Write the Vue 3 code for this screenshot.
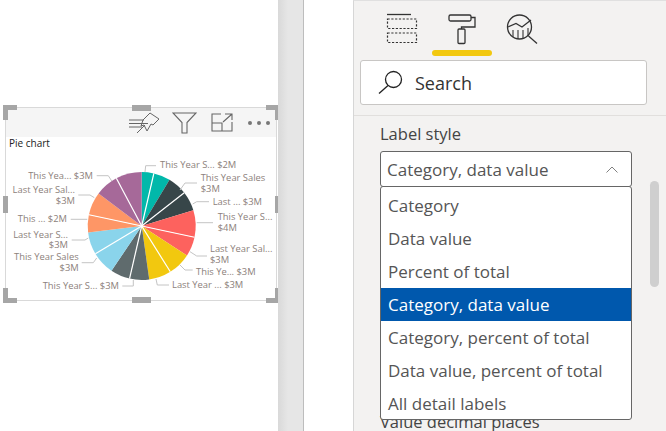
<template>
  <div class="page">
    <div class="canvas">
      <div class="visual">
        <div class="visual-header">
          <svg class="hd-icon pin" width="31" height="21" viewBox="0 0 31 21" fill="none" stroke="#666" stroke-width="1">
            <path d="M0 8H15M0 11.5H19M0 15H13" />
            <path d="M14 8L21 1L30 7L24 13L22 12L18 19L15 13L12 14Z" />
            <path d="M8 21L16 13" />
          </svg>
          <svg class="hd-icon funnel" width="25" height="22" viewBox="0 0 25 22" fill="none" stroke="#666" stroke-width="1.1">
            <path d="M1 1H24L15 10.5V21H10V10.5Z" />
          </svg>
          <svg class="hd-icon expand" width="22" height="19" viewBox="0 0 22 19" fill="none" stroke="#666" stroke-width="1.1">
            <path d="M10 1H1V18H21V9" />
            <path d="M1 10H11V18" />
            <path d="M12 9L21 1M14 1H21V7" />
          </svg>
          <div class="dots"><i></i><i></i><i></i></div>
        </div>
        <div class="visual-title">Pie chart</div>
        <!-- viewBox uses page coordinates so the labels read directly off the screenshot -->
        <svg class="pie" width="270" height="150" viewBox="6 150 270 150">
          <path v-for="s in slices" :key="s.from" :d="s.d" :fill="s.color" />
          <path v-for="(d, i) in separators" :key="'sep' + i" :d="d" stroke="#fff" stroke-width="1.2" />
          <path v-for="(l, i) in leaders" :key="'lead' + i" :d="l" fill="none" stroke="#c4c4c4" stroke-width="1" />
          <text
            v-for="(t, i) in labels"
            :key="'label' + i"
            :x="t.x"
            :y="t.y"
            :text-anchor="t.anchor || 'start'"
            class="pie-label"
          >{{ t.text }}</text>
        </svg>
        <span v-for="h in handles" :key="h" class="handle" :class="h"></span>
      </div>
    </div>
    <div class="gutter"></div>
    <div class="spacer"></div>
    <div class="pane">
      <div class="tabs">
        <button class="tab">
          <svg width="32" height="31" viewBox="0 0 32 31" fill="none" stroke="#333" stroke-width="1.2">
            <path d="M1 1.5H25" stroke-width="1.3" />
            <path d="M1.5 6H30.5V15.5H1.5ZM1.5 20H30.5V29.5H1.5Z" stroke-dasharray="2.2 1.6" />
          </svg>
        </button>
        <button class="tab active">
          <svg width="30" height="32" viewBox="0 0 30 32" fill="none" stroke="#333" stroke-width="1.3">
            <rect x="2" y="2" width="22" height="6" rx="1.5" />
            <path d="M24 4.5H28V14H14.5V16" />
            <rect x="11" y="16" width="7" height="14.5" rx="1" />
          </svg>
        </button>
        <button class="tab">
          <svg width="32" height="32" viewBox="0 0 32 32" fill="none" stroke="#333" stroke-width="1.3">
            <circle cx="13.5" cy="14" r="12" />
            <path d="M2 14L10 10.5L16 14L25 7" />
            <path d="M7 17V24M12 17V26M17 17V26M22 15V23" stroke-width="1.1" />
            <path d="M22.5 23L31 30.5" />
          </svg>
        </button>
      </div>
      <div class="search">
        <svg width="25" height="25" viewBox="0 0 25 25" fill="none" stroke="#222" stroke-width="1.3">
          <circle cx="15.5" cy="9.5" r="8" />
          <path d="M10 15.5L1 23.5" />
        </svg>
        <span>Search</span>
      </div>
      <div class="divider"></div>
      <div class="field-label">Label style</div>
      <div class="select-wrap">
        <div class="select">
          <span>Category, data value</span>
          <svg width="12" height="7" viewBox="0 0 12 7" fill="none" stroke="#808080" stroke-width="1">
            <path d="M0.5 6.5L6 1L11.5 6.5" />
          </svg>
        </div>
        <ul class="menu">
          <li v-for="o in options" :key="o" :class="{ selected: o === selected }">{{ o }}</li>
        </ul>
      </div>
      <div class="field-label next">Value decimal places</div>
      <div class="scrollbar"></div>
    </div>
  </div>
</template>

<script setup>
const cx = 141.7
const cy = 226
const r = 54

const colors = ['#01b8aa', '#374649', '#fd625e', '#f2c80f', '#5f6b6d', '#8ad4eb', '#fe9666', '#a66999']
// slice edges in degrees, clockwise from the top
const edges = [0, 13, 31, 52, 73, 102, 123, 148, 172, 193, 214, 239, 263, 282, 307, 332, 360]

function point(deg) {
  const a = (deg * Math.PI) / 180
  return `${(cx + r * Math.sin(a)).toFixed(2)} ${(cy - r * Math.cos(a)).toFixed(2)}`
}

const slices = edges.slice(0, -1).map((from, i) => {
  const to = edges[i + 1]
  return {
    from,
    color: colors[Math.floor(i / 2)],
    d: `M${cx} ${cy}L${point(from)}A${r} ${r} 0 0 1 ${point(to)}Z`
  }
})

// the white line only shows between two slices of one colour
const separators = edges.filter((_, i) => i % 2 === 1).map((deg) => `M${cx} ${cy}L${point(deg)}`)

const leaders = [
  'M145 172L145.7 165.7H156',
  'M180 190L185 183H197',
  'M192.7 204L196.7 201.7H209',
  'M196.7 222.7H213',
  'M190 251.7L196.7 256H207',
  'M180 265L185 270H192.7',
  'M156 279L157.3 285H169',
  'M133.3 280V286H122.3',
  'M96.7 258L93.3 262.7H81.7',
  'M88.3 238L85 240H71.7',
  'M87.3 219.3H70.7',
  'M94.3 197.7L90 195H78.3',
  'M111.7 181L108.3 175.7H96.7'
]

const labels = [
  { x: 160, y: 168, text: 'This Year S... $2M' },
  { x: 200.7, y: 181, text: 'This Year Sales' },
  { x: 200.7, y: 192, text: '$3M' },
  { x: 212.7, y: 205, text: 'Last ... $3M' },
  { x: 217.7, y: 220, text: 'This Year S...' },
  { x: 217.7, y: 231, text: '$4M' },
  { x: 210, y: 252, text: 'Last Year Sal...' },
  { x: 210, y: 263, text: '$3M' },
  { x: 196, y: 275, text: 'This Ye... $3M' },
  { x: 172, y: 288, text: 'Last Year ... $3M' },
  { x: 119, y: 289, text: 'This Year S... $3M', anchor: 'end' },
  { x: 78.7, y: 260, text: 'This Year Sales', anchor: 'end' },
  { x: 78.7, y: 271, text: '$3M', anchor: 'end' },
  { x: 68, y: 238, text: 'Last Year S...', anchor: 'end' },
  { x: 68, y: 248, text: '$3M', anchor: 'end' },
  { x: 67, y: 222, text: 'This ... $2M', anchor: 'end' },
  { x: 75, y: 193, text: 'Last Year Sal...', anchor: 'end' },
  { x: 75, y: 204, text: '$3M', anchor: 'end' },
  { x: 93, y: 179, text: 'This Yea... $3M', anchor: 'end' }
]

const handles = ['tl', 'tm', 'tr', 'ml', 'mr', 'bl', 'bm', 'br']

const options = [
  'Category',
  'Data value',
  'Percent of total',
  'Category, data value',
  'Category, percent of total',
  'Data value, percent of total',
  'All detail labels'
]
const selected = 'Category, data value'
</script>

<style>
html,
body {
  margin: 0;
  background: #fff;
}
</style>

<style scoped>
.page {
  display: flex;
  width: 666px;
  height: 431px;
  overflow: hidden;
  font-family: "Open Sans", "Noto Sans", sans-serif;
  color: #333;
}

.canvas {
  width: 278px;
  flex: none;
  padding: 107px 0 0 5px;
  box-sizing: border-box;
  background: #fff;
  overflow: hidden;
}

.gutter {
  width: 26px;
  flex: none;
  background: linear-gradient(90deg, #d9d9d9, #e6e6e6 10px);
  border-right: 1px solid #bdbdbd;
  box-sizing: border-box;
}

.spacer {
  width: 49px;
  flex: none;
  background: #fff;
}

.pane {
  position: relative;
  flex: 1;
  background: #f3f2f1;
  border-left: 1px solid #d6d6d6;
  border-top: 1px solid #e0e0e0;
  padding: 0 6px;
  box-sizing: border-box;
}

/* visual */
.visual {
  position: relative;
  width: 272px;
  height: 194px;
  border: 1px solid #d9d9d9;
  box-sizing: border-box;
  background: #fff;
}

.visual-header {
  display: flex;
  align-items: center;
  height: 29px;
  padding: 0 0 0 123px;
  background: #f5f5f5;
}

.hd-icon {
  flex: none;
}

.funnel {
  margin-left: 12px;
}

.expand {
  margin-left: 14px;
}

.dots {
  display: flex;
  gap: 5px;
  margin-left: 15px;
}

.dots i {
  width: 4px;
  height: 4px;
  border-radius: 50%;
  background: #777;
}

.visual-title {
  height: 13px;
  padding-left: 3px;
  font-size: 10px;
  line-height: 13px;
  color: #222;
}

.pie {
  display: block;
}

.pie-label {
  font-size: 9.4px;
  fill: #8c817b;
}

.handle {
  position: absolute;
  background: #a6a6a6;
}

.tm,
.bm {
  left: 126px;
  width: 19px;
  height: 6px;
}

.tm {
  top: -3px;
}

.bm {
  bottom: -3px;
}

.ml,
.mr {
  top: 88px;
  height: 17px;
}

.ml {
  left: -3px;
  width: 5px;
}

.mr {
  right: -2px;
  width: 3px;
}

.tl,
.tr,
.bl,
.br {
  width: 14px;
  height: 15px;
  background: none;
  border: 0 solid #a6a6a6;
  box-sizing: border-box;
}

.tl {
  top: -3px;
  left: -3px;
  border-width: 5px 0 0 5px;
}

.tr {
  top: -3px;
  right: -2px;
  width: 12px;
  border-width: 5px 3px 0 0;
}

.bl {
  bottom: -3px;
  left: -3px;
  border-width: 0 0 5px 5px;
}

.br {
  bottom: -3px;
  right: -2px;
  width: 12px;
  border-width: 0 3px 5px 0;
}

/* format pane */
.tabs {
  display: flex;
  height: 59px;
  padding-left: 12px;
}

.tab {
  position: relative;
  display: flex;
  justify-content: center;
  width: 60px;
  padding: 12px 0 0;
  border: 0;
  background: none;
}

.tab.active::after {
  content: "";
  position: absolute;
  left: 0;
  right: 0;
  top: 49px;
  height: 6px;
  border-radius: 3px;
  background: #f2c80f;
}

.search {
  display: flex;
  align-items: center;
  gap: 12px;
  height: 45px;
  margin-right: 13px;
  padding-left: 17px;
  background: #fff;
  border: 1px solid #c8c6c4;
  border-radius: 3px;
  box-sizing: border-box;
  font-size: 18px;
}

.divider {
  height: 1px;
  margin: 10px -6px 0;
  background: #e1dfdd;
}

.field-label {
  margin: 7px 0 0 20px;
  font-size: 16.5px;
  line-height: 22px;
  color: #444;
}

.select-wrap {
  position: relative;
  width: 252px;
  margin: 6px 0 0 20px;
}

.select {
  display: flex;
  align-items: center;
  justify-content: space-between;
  height: 36px;
  padding: 0 13px 0 6px;
  background: #fff;
  border: 1px solid #666;
  border-radius: 3px;
  box-sizing: border-box;
  font-size: 17px;
  color: #555;
}

.menu {
  position: absolute;
  top: 35px;
  left: 0;
  right: 0;
  height: 234px;
  margin: 0;
  padding: 2px 0 0;
  list-style: none;
  background: #fff;
  border: 1px solid #666;
  border-radius: 3px;
  box-sizing: border-box;
}

.menu li {
  height: 33px;
  padding-left: 7px;
  font-size: 17px;
  line-height: 33px;
  color: #555;
}

.menu li.selected {
  background: #0058ad;
  color: #fff;
}

.field-label.next {
  margin-top: 224px;
}

.scrollbar {
  position: absolute;
  top: 180px;
  left: 296px;
  width: 9px;
  height: 106px;
  border-radius: 5px;
  background: #cfcfcf;
}
</style>
